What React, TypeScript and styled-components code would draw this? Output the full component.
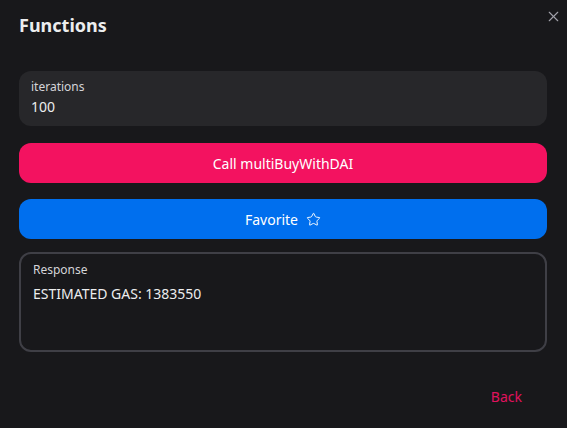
import styled, { createGlobalStyle } from 'styled-components';
import { Star, X } from 'lucide-react';

const GlobalStyle = createGlobalStyle`
	html, body {
		margin: 0;
		padding: 0;
		background: #18181b;
	}
	body {
		font-family: 'Noto Sans', 'Open Sans', sans-serif;
		color: #ecedee;
	}
`;

const Modal = styled.div`
	position: relative;
	width: 567px;
	height: 428px;
	background: #18181b;
	display: flex;
	flex-direction: column;
	box-sizing: border-box;
`;

const Header = styled.header`
	padding: 13px 19px 0;
	font-size: 18px;
	font-weight: 700;
	line-height: 25px;
	color: #ecedee;
`;

const CloseButton = styled.button`
	position: absolute;
	top: 4px;
	right: 2px;
	width: 24px;
	height: 24px;
	padding: 0;
	border: none;
	background: transparent;
	color: #a1a1aa;
	display: flex;
	align-items: center;
	justify-content: center;
	cursor: pointer;
`;

const Body = styled.div`
	padding: 0 20px 0 19px;
	margin-top: 33px;
	display: flex;
	flex-direction: column;
`;

const InputWrapper = styled.label`
	display: flex;
	flex-direction: column;
	height: 55px;
	box-sizing: border-box;
	padding: 8px 12px;
	background: #27272a;
	border-radius: 12px;
`;

const InputLabel = styled.span`
	font-size: 12px;
	line-height: 16px;
	color: #d4d4d8;
`;

const Input = styled.input`
	border: none;
	outline: none;
	background: transparent;
	padding: 0;
	margin-top: 2px;
	font-family: inherit;
	font-size: 14px;
	line-height: 20px;
	color: #ecedee;
`;

const Button = styled.button<{ $color: string; $mt: number }>`
	margin-top: ${(p) => p.$mt}px;
	height: 40px;
	border: none;
	border-radius: 12px;
	background: ${(p) => p.$color};
	color: #fff;
	font-family: inherit;
	font-size: 14px;
	display: flex;
	align-items: center;
	justify-content: center;
	gap: 8px;
	cursor: pointer;
`;

const ResponseBox = styled.div`
	margin-top: 13px;
	height: 100px;
	box-sizing: border-box;
	border: 2px solid #3f3f46;
	border-radius: 12px;
	padding: 8px 12px;
	display: flex;
	flex-direction: column;
`;

const ResponseLabel = styled.span`
	font-size: 12px;
	line-height: 16px;
	color: #d4d4d8;
`;

const ResponseText = styled.span`
	margin-top: 6px;
	font-size: 14px;
	line-height: 20px;
	color: #ecedee;
`;

const Footer = styled.footer`
	display: flex;
	justify-content: flex-end;
	padding: 24px 29px 0 0;
`;

const BackButton = styled.button`
	height: 40px;
	padding: 0 16px;
	border: none;
	border-radius: 12px;
	background: transparent;
	color: #e0125e;
	font-family: inherit;
	font-size: 14px;
	cursor: pointer;
`;

function App() {
	return (
		<>
			<GlobalStyle />
			<Modal>
				<CloseButton aria-label='Close'>
					<X size={17} strokeWidth={1.6} />
				</CloseButton>

				<Header>Functions</Header>

				<Body>
					<InputWrapper>
						<InputLabel>iterations</InputLabel>
						<Input defaultValue='100' />
					</InputWrapper>

					<Button $color='#f31260' $mt={17}>
						Call multiBuyWithDAI
					</Button>

					<Button $color='#006fee' $mt={16}>
						Favorite
						<Star size={15} strokeWidth={1.5} />
					</Button>

					<ResponseBox>
						<ResponseLabel>Response</ResponseLabel>
						<ResponseText>ESTIMATED GAS: 1383550</ResponseText>
					</ResponseBox>
				</Body>

				<Footer>
					<BackButton>Back</BackButton>
				</Footer>
			</Modal>
		</>
	);
}

export default App;
